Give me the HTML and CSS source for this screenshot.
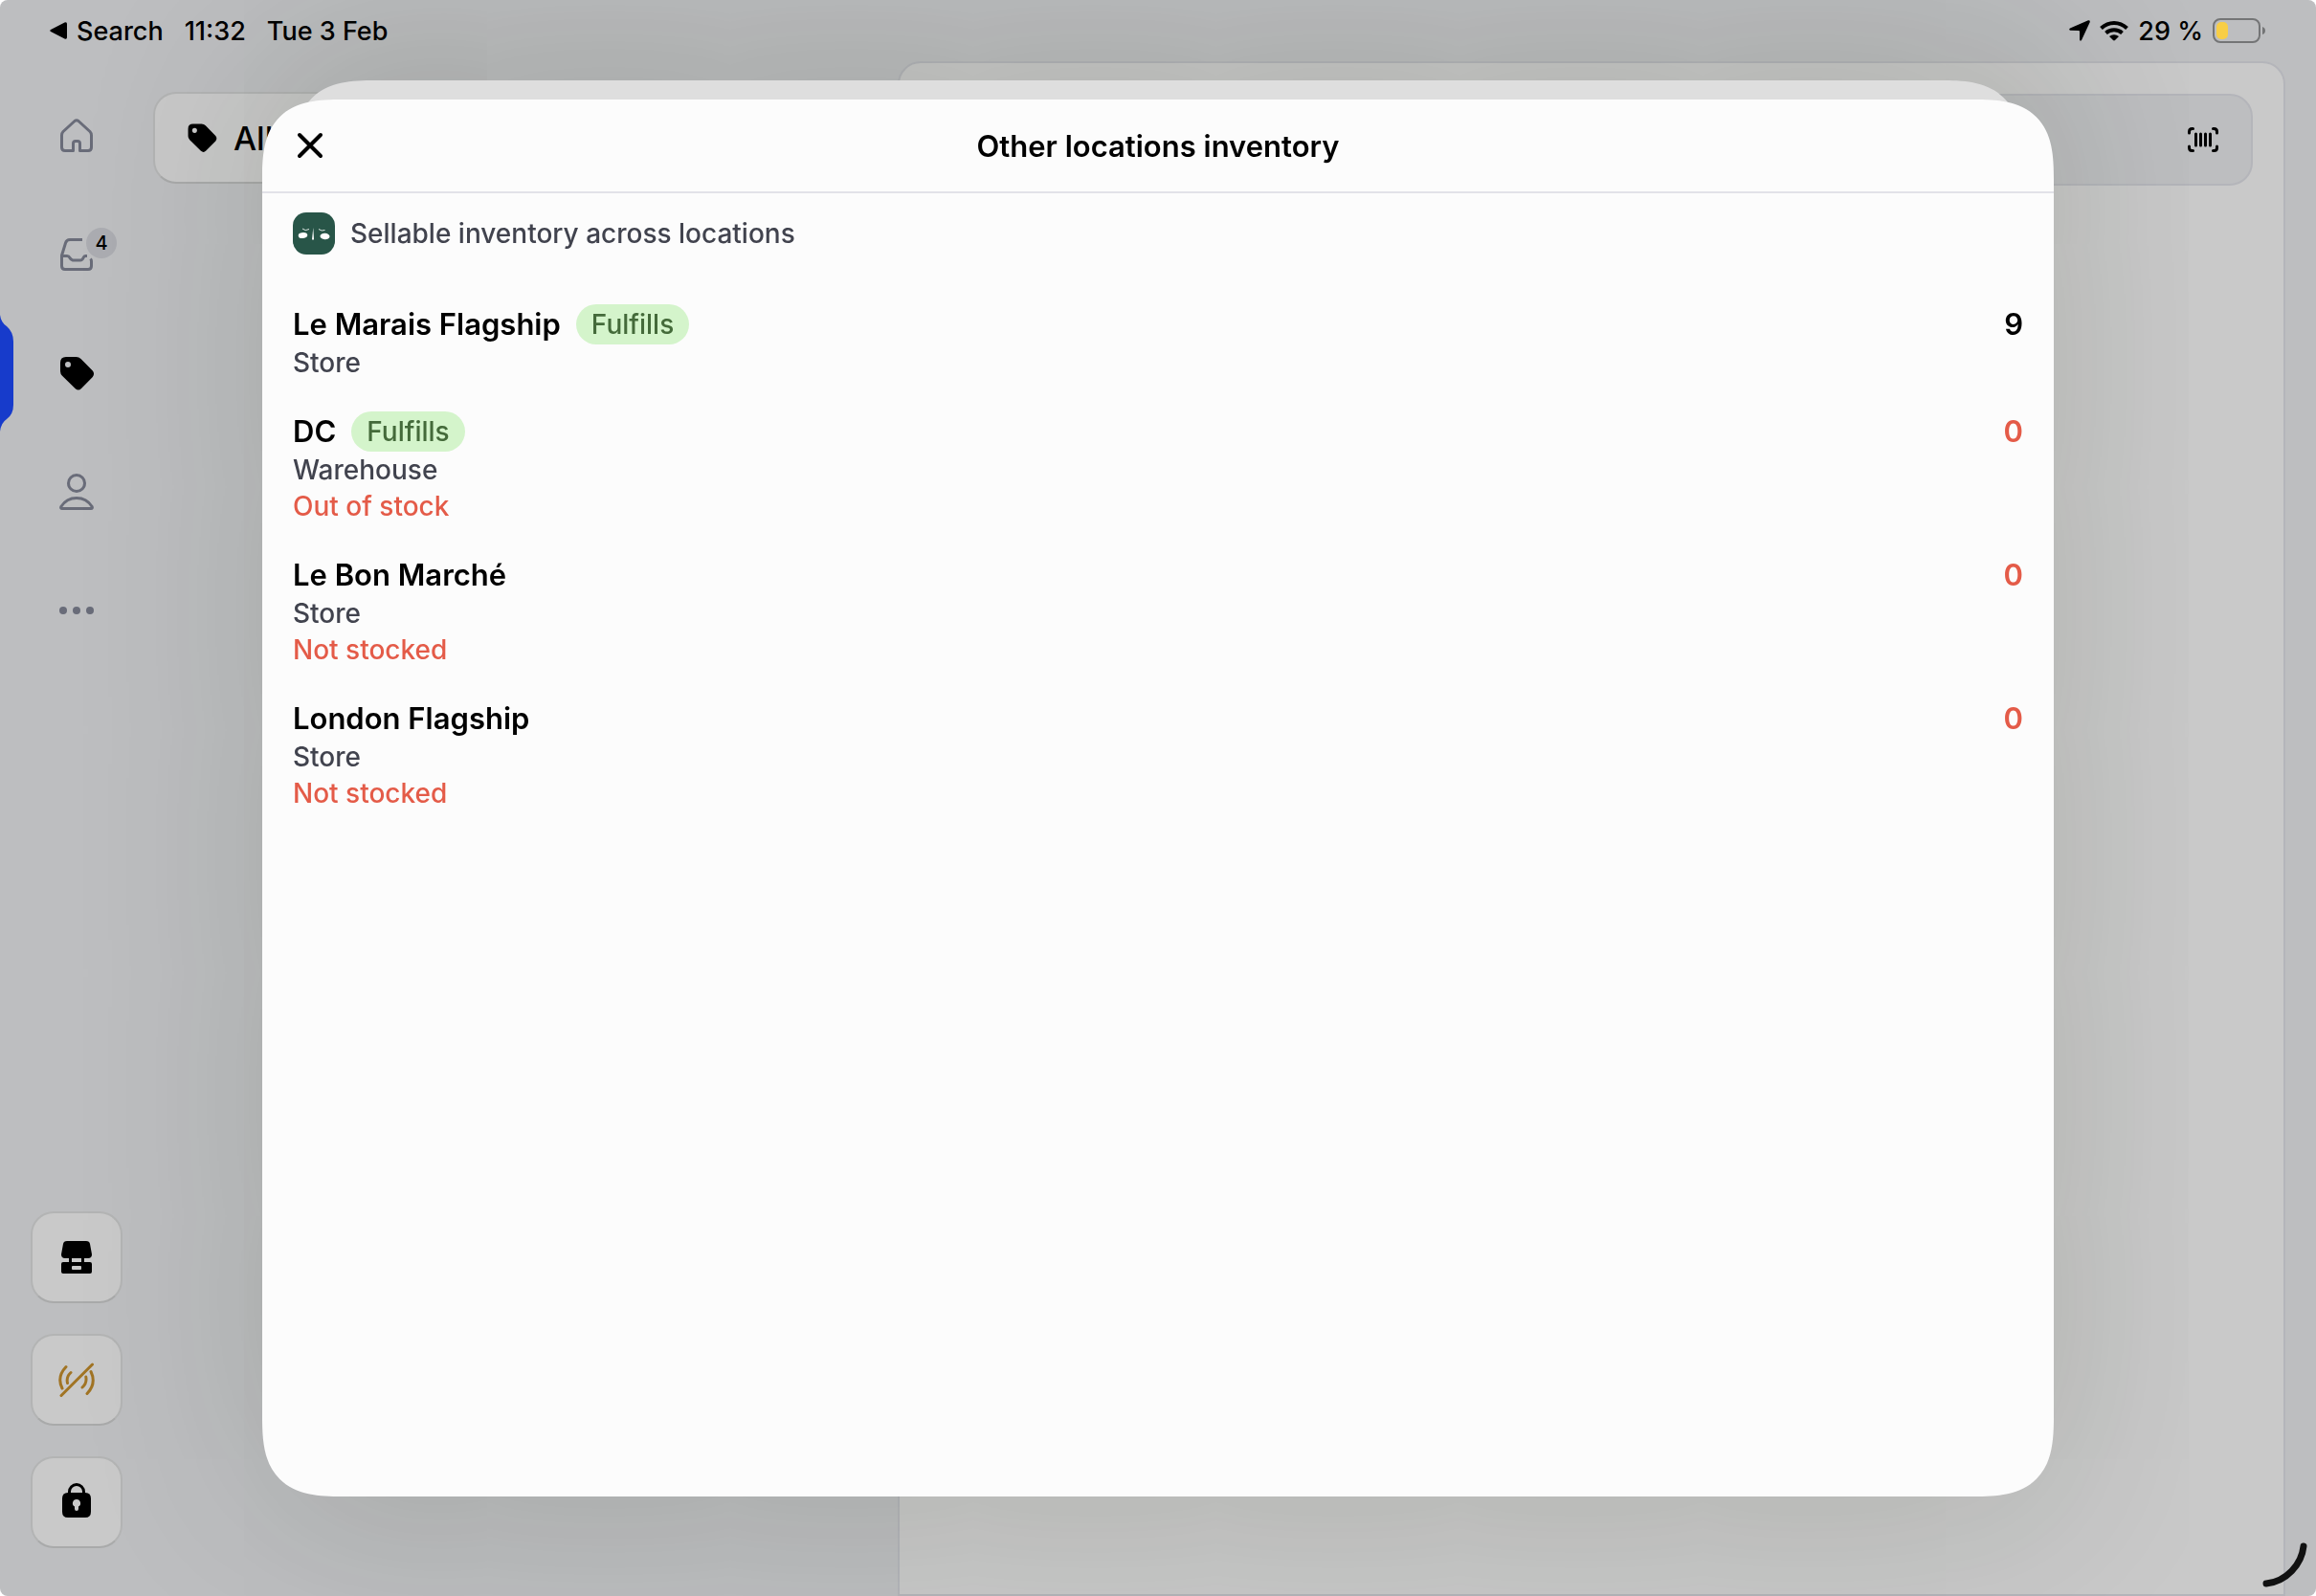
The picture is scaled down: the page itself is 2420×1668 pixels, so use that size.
FILE: index.html
```html
<!DOCTYPE html>
<html lang="en">
<head>
    <meta charset="UTF-8">
    <meta name="viewport" content="width=device-width, initial-scale=1.0">
    <title>Other locations inventory</title>
    <link rel="stylesheet" href="styles.css">
</head>
<body>
    <div class="screen">
        <header class="status-bar">
            <div class="status-left">
                <a class="back-link" href="#search">
                    <svg width="18" height="20" viewBox="0 0 18 20"><path d="M1 9 15.500 1.500Q18 .5 18 3V17Q18 19.500 15.500 18.500L1 11Q-.5 10 1 9Z"/></svg>
                    Search
                </a>
                <span>11:32</span>
                <span>Tue 3 Feb</span>
            </div>
            <div class="status-right">
                <svg width="22" height="22" viewBox="0 0 22 22"><path d="M20 .3 1 8.500Q-.8 10 1.200 10.800L10 11Q11 11 11 12V20.500Q11.500 22.500 13 21L21.800 2Q22 0 20 .3Z"/></svg>
                <svg width="30" height="22" viewBox="0 0 30 22">
                    <g fill="none" stroke="#000" stroke-width="4">
                        <path d="M1.500 8.500Q7.500 3 15 3T28.500 8.500"/>
                        <path d="M6.500 13.500Q10 10.300 15 10.300T23.500 13.500"/>
                    </g>
                    <path d="M10 17Q15 13.500 20 17L16 21Q15 21.800 14 21Z"/>
                </svg>
                <span>29 %</span>
                <svg width="56" height="26" viewBox="0 0 56 26">
                    <rect x="1" y="1" width="48" height="24" rx="7" fill="none" stroke="#747576" stroke-width="2"/>
                    <rect x="4" y="4" width="12" height="18" rx="5" fill="#f8ce46"/>
                    <path d="M52 9Q55 10 55 13T52 17Z" fill="#747576"/>
                </svg>
            </div>
        </header>

        <div class="app">
            <aside class="sidebar">
                <nav class="nav">
                    <a class="nav-item" href="#home" aria-label="Home">
                        <svg class="line-icon" viewBox="0 0 40 40"><path d="M18 4.500 6 15.500Q4.500 17 4.500 19.500V32Q4.500 35.500 8 35.500H16.500V28Q16.500 25.500 19 25.500H21Q23.500 25.500 23.500 28V35.500H32Q35.500 35.500 35.500 32V19.500Q35.500 17 34 15.500L22 4.500Q20 3 18 4.500Z"/></svg>
                    </a>
                    <a class="nav-item" href="#inbox" aria-label="Orders">
                        <svg class="line-icon" viewBox="0 0 40 40"><path d="M26 4.500H13Q9.500 4.500 8.500 8L4.500 21V32Q4.500 35.500 8 35.500H32Q35.500 35.500 35.500 32V27Q35.500 25.500 34.500 24.500M4.500 21.500H10Q12 21.500 13 23.500T16 26H24Q26 26 27 23.500T30 21.500H31"/></svg>
                        <span class="nav-badge">4</span>
                    </a>
                    <a class="nav-item nav-item-active" href="#products" aria-label="Products">
                        <svg class="nav-marker" width="14" height="122" viewBox="0 0 14 122"><path d="M0 0Q1 8 7 12Q14 18 14 28V94Q14 104 7 109Q1 113 0 122Z"/></svg>
                        <svg viewBox="0 0 40 40"><path fill-rule="evenodd" d="M9 3H19.500Q22.500 3 24.500 5L36.800 17.500Q39.300 20.500 36.800 24L25 36Q22 39 18.800 36.200L5 22.700Q3 20.700 3 18V9Q3 3 9 3ZM11 8A3 3 0 1 0 11 14 3 3 0 1 0 11 8Z"/></svg>
                    </a>
                    <a class="nav-item" href="#customers" aria-label="Customers">
                        <svg class="line-icon" viewBox="0 0 40 40"><circle cx="20" cy="11" r="8.500"/><path d="M3.800 35.500Q9.500 26.500 20 26.500T36.200 35.500Q37 37.500 35 37.500H5Q3 37.500 3.800 35.500Z"/></svg>
                    </a>
                    <a class="nav-item" href="#more" aria-label="More">
                        <svg class="dots-icon" viewBox="0 0 40 40"><circle cx="6" cy="20" r="4"/><circle cx="20" cy="20" r="4"/><circle cx="34" cy="20" r="4"/></svg>
                    </a>
                </nav>
                <div class="tools">
                    <button class="tile" type="button" aria-label="Register">
                        <svg viewBox="0 0 40 40"><path fill-rule="evenodd" d="M10 3H30Q33.500 3 34 6L36 17Q36 21 32 21H28V25H34Q36 25 36 27V35Q36 37 34 37H6Q4 37 4 35V27Q4 25 6 25H12V21H8Q4 21 4 17L6 6Q6.500 3 10 3ZM15 21V25H25V21ZM16 29Q15 29 15 30V32Q15 33 16 33H24Q25 33 25 32V30Q25 29 24 29Z"/></svg>
                    </button>
                    <button class="tile" type="button" aria-label="Reader disconnected">
                        <svg class="signal-icon" viewBox="0 0 40 40"><path d="M4 36.500 36.500 4M9 6.500Q-1 17 5 29M14 12.500Q9 17 10.500 23.500M35 11.500Q41 24 31 34.500M29.800 17Q31 23.500 26 28"/></svg>
                    </button>
                    <button class="tile" type="button" aria-label="Lock">
                        <svg viewBox="0 0 40 40"><path d="M12.500 12V9A7.500 7.500 0 0 1 27.500 9V12" fill="none" stroke="#000" stroke-width="3"/><path fill-rule="evenodd" d="M11 10H29Q35 10 35 16V30Q35 36 29 36H11Q5 36 5 30V16Q5 10 11 10ZM20 17A4 4 0 0 0 18 24.500V27A2 2 0 0 0 22 27V24.500A4 4 0 0 0 20 17Z"/></svg>
                    </button>
                </div>
            </aside>

            <main class="workspace">
                <section class="catalog">
                    <button class="filter" type="button">
                        <svg width="34" height="34" viewBox="0 0 40 40"><path fill-rule="evenodd" d="M9 3H19.500Q22.500 3 24.500 5L36.800 17.500Q39.300 20.500 36.800 24L25 36Q22 39 18.800 36.200L5 22.700Q3 20.700 3 18V9Q3 3 9 3ZM11 8A3 3 0 1 0 11 14 3 3 0 1 0 11 8Z"/></svg>
                        All products
                    </button>
                </section>
                <section class="panel">
                    <div class="search">
                        <input class="search-input" type="search" aria-label="Search">
                        <button class="scan" type="button" aria-label="Scan barcode">
                            <svg width="32" height="26" viewBox="0 0 32 26"><path d="M1.500 6V4.500Q1.500 1.500 4.500 1.500H5.500M26.500 1.500H27.500Q30.500 1.500 30.500 4.500V6M30.500 20V21.500Q30.500 24.500 27.500 24.500H26.500M5.500 24.500H4.500Q1.500 24.500 1.500 21.500V20M8.500 7V19M13.500 7V19M18.500 7V19M23.500 7V19"/></svg>
                        </button>
                    </div>
                </section>
            </main>
        </div>
    </div>

    <div class="overlay">
        <div class="sheet-behind"></div>
        <div class="modal" role="dialog" aria-labelledby="modal-title">
            <div class="modal-header">
                <button class="close" type="button" aria-label="Close">
                    <svg width="36" height="36" viewBox="0 0 36 36"><path d="M7 7 29 29M29 7 7 29"/></svg>
                </button>
                <h1 id="modal-title">Other locations inventory</h1>
            </div>
            <div class="modal-body">
                <div class="source">
                    <svg class="app-logo" width="44" height="44" viewBox="0 0 44 44">
                        <g fill="#fff">
                            <ellipse cx="10.500" cy="24" rx="4.800" ry="3" transform="rotate(-6 10.500 24)"/>
                            <ellipse cx="33.500" cy="25" rx="5" ry="3.200" transform="rotate(4 33.500 25)"/>
                            <path d="M21.300 16 20 28.500H22Z"/>
                        </g>
                        <path d="M10 17Q13 20 17 17.500M27 17.500Q30 20 33.500 18.500" fill="none" stroke="#dfe8e4"/>
                    </svg>
                    Sellable inventory across locations
                </div>
                <ul class="locations">
                    <li class="location">
                        <div>
                            <div class="location-name">Le Marais Flagship <span class="tag">Fulfills</span></div>
                            <div class="location-type">Store</div>
                        </div>
                        <div class="quantity">9</div>
                    </li>
                    <li class="location">
                        <div>
                            <div class="location-name">DC <span class="tag">Fulfills</span></div>
                            <div class="location-type">Warehouse</div>
                            <div class="location-note">Out of stock</div>
                        </div>
                        <div class="quantity empty">0</div>
                    </li>
                    <li class="location">
                        <div>
                            <div class="location-name">Le Bon Marché</div>
                            <div class="location-type">Store</div>
                            <div class="location-note">Not stocked</div>
                        </div>
                        <div class="quantity empty">0</div>
                    </li>
                    <li class="location">
                        <div>
                            <div class="location-name">London Flagship</div>
                            <div class="location-type">Store</div>
                            <div class="location-note">Not stocked</div>
                        </div>
                        <div class="quantity empty">0</div>
                    </li>
                </ul>
            </div>
        </div>
    </div>

    <svg class="corner-mark" width="60" height="60" viewBox="0 0 60 60"><path d="M47 8C45 27 29 45 8 47"/></svg>
</body>
</html>
```
FILE: styles.css
```css
* {
    box-sizing: border-box;
}

body {
    margin: 0;
    background-color: #fff;
    color: #000;
    font-family: Inter, "Liberation Sans", sans-serif;
    font-size: 28px;
}

button {
    font: inherit;
    color: inherit;
    padding: 0;
    border: none;
    background: none;
    cursor: pointer;
}

a {
    color: inherit;
    text-decoration: none;
}

svg {
    display: block;
    flex-shrink: 0;
}

.screen {
    display: flex;
    flex-direction: column;
    height: 100vh;
    border-radius: 8px;
    overflow: hidden;
    background-color: #bdbec0;
}

/* Status bar */
.status-bar {
    display: flex;
    justify-content: space-between;
    align-items: center;
    height: 64px;
    padding: 0 52px;
    font-size: 27px;
    font-weight: 500;
}

.status-left {
    display: flex;
    align-items: center;
    gap: 22px;
}

.back-link {
    display: flex;
    align-items: center;
    gap: 10px;
}

.status-right {
    display: flex;
    align-items: center;
    gap: 10px;
}

/* App frame */
.app {
    display: flex;
    flex: 1;
}

.sidebar {
    display: flex;
    flex-direction: column;
    justify-content: space-between;
    width: 160px;
    padding: 16px 0 50px;
}

.nav-item {
    position: relative;
    display: flex;
    align-items: center;
    justify-content: center;
    height: 124px;
}

.nav-item svg:not(.nav-marker),
.tile svg {
    width: 40px;
    height: 40px;
}

.nav-marker {
    position: absolute;
    left: 0;
    top: 1px;
    fill: #173bcb;
}

.line-icon {
    fill: none;
    stroke: #696c79;
    stroke-width: 3;
    stroke-linecap: butt;
    stroke-linejoin: round;
}

.dots-icon {
    fill: #696c79;
}

.nav-badge {
    position: absolute;
    top: 34px;
    left: 90px;
    width: 32px;
    height: 32px;
    border-radius: 50%;
    background-color: #abacb1;
    font-size: 20px;
    font-weight: 500;
    line-height: 32px;
    text-align: center;
}

.tools {
    display: flex;
    flex-direction: column;
    align-items: center;
    gap: 32px;
}

.tile {
    display: flex;
    align-items: center;
    justify-content: center;
    width: 96px;
    height: 96px;
    border: 2px solid #b3b4b4;
    border-bottom-color: #a9aaaa;
    border-radius: 24px;
    background-color: #c9c9c9;
}

.signal-icon {
    fill: none;
    stroke: #a17424;
    stroke-width: 3;
    stroke-linecap: round;
}

.workspace {
    display: flex;
    flex: 1;
    padding-right: 32px;
}

.catalog {
    width: 778px;
    padding: 32px 32px 0 0;
}

.filter {
    display: flex;
    align-items: center;
    gap: 16px;
    width: 100%;
    height: 96px;
    padding: 0 32px;
    border: 2px solid #b3b4b4;
    border-bottom-color: #a9aaaa;
    border-radius: 24px;
    background-color: #c9c9c9;
    font-size: 34px;
    font-weight: 500;
}

.panel {
    flex: 1;
    padding: 32px;
    border: 2px solid #b4b5ba;
    border-radius: 24px 24px 0 0;
    background-color: #c9c9c9;
}

.search {
    display: flex;
    align-items: center;
    height: 96px;
    padding: 0 34px;
    border: 2px solid #b4b5ba;
    border-radius: 24px;
    background-color: #bdbec0;
}

.search-input {
    flex: 1;
    border: none;
    background: none;
    font: inherit;
}

.scan svg {
    fill: none;
    stroke: #000;
    stroke-width: 3;
    stroke-linecap: round;
}

/* Modal sheets */
.overlay {
    position: fixed;
    inset: 0;
    display: flex;
    padding: 104px 274px;
    overflow: hidden;
}

.sheet-behind {
    position: absolute;
    top: 84px;
    bottom: 124px;
    left: 308px;
    right: 308px;
    border-radius: 64px;
    background-color: #dedede;
    box-shadow: 0 0 200px 34px rgba(20, 30, 0, 0.16);
}

.modal {
    position: relative;
    flex: 1;
    border-radius: 64px;
    background-color: #fcfcfc;
}

@supports (corner-shape: superellipse(1.5)) {
    .modal,
    .sheet-behind {
        border-radius: 84px;
        corner-shape: superellipse(1.5);
    }
}

.modal-header {
    display: grid;
    grid-template-columns: 1fr auto 1fr;
    align-items: center;
    height: 98px;
    padding: 0 32px;
    border-bottom: 2px solid #e2e2e8;
}

.modal-header h1 {
    margin: 0;
    font-size: 31px;
    font-weight: 600;
}

.close {
    justify-self: start;
}

.close svg {
    fill: none;
    stroke: #000;
    stroke-width: 4;
    stroke-linecap: round;
}

.modal-body {
    padding: 20px 32px;
}

.source {
    display: flex;
    align-items: center;
    gap: 16px;
    margin-bottom: 52px;
    color: #41434e;
    font-weight: 500;
}

.app-logo {
    border-radius: 14px;
    background-color: #285548;
}

.locations {
    display: flex;
    flex-direction: column;
    gap: 32px;
    margin: 0;
    padding: 0;
    list-style: none;
}

.location {
    display: flex;
    justify-content: space-between;
    line-height: 38px;
}

.location-name {
    display: flex;
    align-items: center;
    gap: 16px;
    height: 42px;
    font-size: 31px;
    font-weight: 600;
}

.tag {
    padding: 0 16px;
    border-radius: 21px;
    background-color: #d4f4cb;
    color: #446a3a;
    font-size: 28px;
    font-weight: 500;
    line-height: 42px;
}

.location-type {
    color: #41434e;
    font-weight: 500;
}

.location-note {
    color: #e45b48;
    font-weight: 500;
}

.quantity {
    font-size: 31px;
    font-weight: 600;
    line-height: 42px;
}

.quantity.empty {
    color: #e45b48;
}

/* Mark in the screen corner */
.corner-mark {
    position: fixed;
    right: 0;
    bottom: 0;
    fill: none;
    stroke: #111;
    stroke-width: 7;
    stroke-linecap: round;
}
```
